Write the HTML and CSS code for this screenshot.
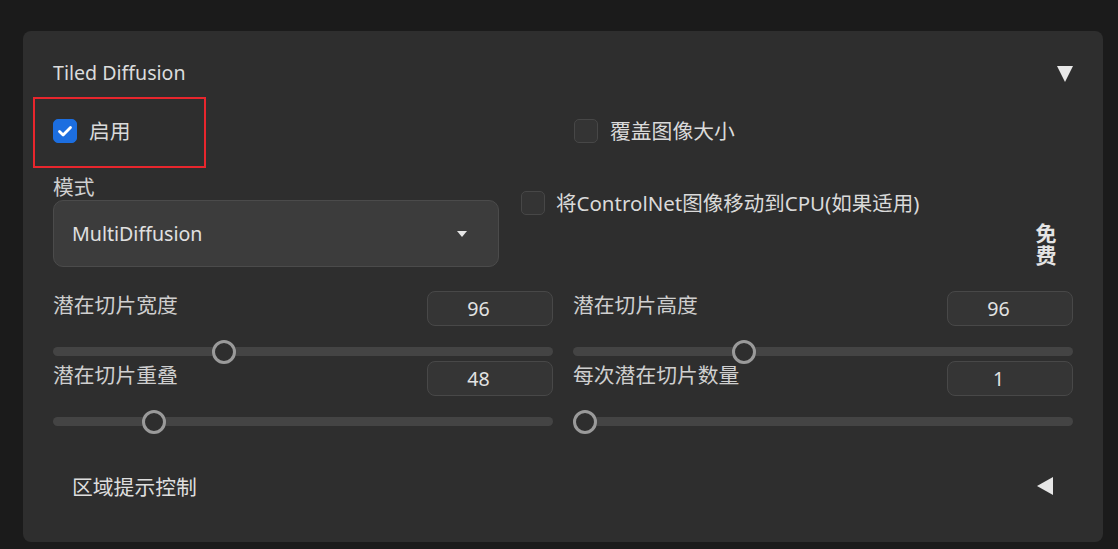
FILE: index.html
```html
<!DOCTYPE html>
<html lang="zh">
<head>
<meta charset="utf-8">
<title>Tiled Diffusion</title>
<link rel="stylesheet" href="styles.css">
</head>
<body>
<div class="panel">
  <div class="header">
    <span class="title">Tiled Diffusion</span>
    <span class="tri-down"></span>
  </div>

  <div class="grid row-check">
    <label class="check"><span class="box on"><svg viewBox="0 0 24 24" width="24" height="24"><path d="M6.5 12.5l3.6 3.6 7.4-7.6" fill="none" stroke="#fff" stroke-width="2.8" stroke-linecap="round" stroke-linejoin="round"/></svg></span><span>启用</span></label>
    <label class="check"><span class="box"></span><span>覆盖图像大小</span></label>
  </div>

  <div class="row-mode">
    <div class="mode">
      <div class="mode-label">模式</div>
      <div class="select"><span>MultiDiffusion</span><span class="tri-small"></span></div>
    </div>
    <label class="check cn"><span class="box"></span><span>将ControlNet图像移动到CPU(如果适用)</span></label>
  </div>

  <div class="grid sliders">
    <div class="slider">
      <div class="s-head"><span>潜在切片宽度</span><span class="num">96</span></div>
      <div class="track"><span class="thumb" style="--p:0.333"></span></div>
    </div>
    <div class="slider">
      <div class="s-head"><span>潜在切片高度</span><span class="num">96</span></div>
      <div class="track"><span class="thumb" style="--p:0.335"></span></div>
    </div>
    <div class="slider">
      <div class="s-head"><span>潜在切片重叠</span><span class="num">48</span></div>
      <div class="track"><span class="thumb" style="--p:0.1875"></span></div>
    </div>
    <div class="slider">
      <div class="s-head"><span>每次潜在切片数量</span><span class="num">1</span></div>
      <div class="track"><span class="thumb" style="--p:0"></span></div>
    </div>
  </div>

  <div class="accordion">
    <span>区域提示控制</span>
    <span class="tri-left"></span>
  </div>

  <div class="highlight"></div>
  <div class="free">免费</div>
</div>
</body>
</html>
```

FILE: styles.css
```css
html, body {
  margin: 0;
  padding: 0;
  background: #1b1b1b;
}
body {
  font-family: "Noto Sans", "Noto Sans CJK SC", sans-serif;
  color: #d6d6d6;
  width: 1118px;
  height: 549px;
  overflow: hidden;
}
.panel {
  position: relative;
  box-sizing: border-box;
  margin: 31px 0 0 23px;
  width: 1080px;
  height: 511px;
  padding: 0 30px;
  background: #2e2e2e;
  border-radius: 8px;
}
.header {
  display: flex;
  justify-content: space-between;
  align-items: center;
  padding-top: 28px;
  height: 28px;
}
.title {
  font-size: 19.6px;
  color: #dcdcdc;
  line-height: 28px;
}
.tri-down {
  width: 0;
  height: 0;
  border-left: 8.5px solid transparent;
  border-right: 8.5px solid transparent;
  border-top: 16px solid #e8e8e8;
  margin-top: 2px;
}
.grid {
  display: grid;
  grid-template-columns: 500px 500px;
  column-gap: 20px;
}
.row-check {
  margin-top: 32px;
  height: 24px;
}
.check {
  display: flex;
  align-items: center;
  gap: 12px;
  font-size: 20.8px;
  line-height: 24px;
  color: #dadada;
}
.box {
  box-sizing: border-box;
  width: 24px;
  height: 24px;
  border-radius: 5px;
  background: #343434;
  border: 1px solid #474747;
  flex: none;
  display: block;
}
.box.on {
  background: #1c6ee0;
  border-color: #1c6ee0;
}
.box svg {
  display: block;
  margin: -1px;
}
.row-check .check:nth-child(2) {
  margin-left: 1px;
}
.row-mode {
  display: flex;
  margin-top: 32px;
}
.mode {
  width: 446px;
}
.mode-label {
  font-size: 20.8px;
  line-height: 24px;
  color: #cfcfcf;
}
.select {
  box-sizing: border-box;
  margin-top: 1px;
  height: 67px;
  border-radius: 10px;
  background: #3c3c3c;
  border: 1px solid #4b4b4b;
  display: flex;
  align-items: center;
  justify-content: space-between;
  padding: 0 31px 0 18px;
  font-size: 19.6px;
  color: #e0e0e0;
}
.tri-small {
  width: 0;
  height: 0;
  border-left: 5.5px solid transparent;
  border-right: 5.5px solid transparent;
  border-top: 6px solid #e6e6e6;
}
.check.cn {
  margin-left: 22px;
  margin-top: 16px;
  align-self: flex-start;
  gap: 11px;
  font-size: 20.5px;
}
.sliders {
  margin-top: 24px;
}
.slider {
  height: 70px;
}
.s-head {
  display: flex;
  justify-content: space-between;
  align-items: flex-start;
  height: 35px;
  font-size: 20.8px;
  line-height: 28px;
  color: #cfcfcf;
}
.num {
  box-sizing: border-box;
  width: 126px;
  height: 35px;
  padding-right: 23px;
  border-radius: 8px;
  background: #353535;
  border: 1px solid #484848;
  text-align: center;
  font-size: 19.6px;
  line-height: 34px;
  color: #e2e2e2;
}
.track {
  position: relative;
  margin-top: 21px;
  height: 9px;
  border-radius: 5px;
  background: #444444;
}
.thumb {
  position: absolute;
  top: 50%;
  left: calc(var(--p) * (100% - 24px));
  box-sizing: border-box;
  width: 24px;
  height: 24px;
  margin-top: -12px;
  border-radius: 50%;
  border: 3px solid #9a9a9a;
  background: #2e2e2e;
}
.accordion {
  display: flex;
  justify-content: space-between;
  align-items: center;
  margin-top: 40px;
  padding: 0 20px 0 19px;
  height: 30px;
  font-size: 20.8px;
  color: #dedede;
}
.tri-left {
  width: 0;
  height: 0;
  border-top: 9.5px solid transparent;
  border-bottom: 9.5px solid transparent;
  border-right: 16px solid #e6e6e6;
}
.highlight {
  position: absolute;
  left: 10px;
  top: 66px;
  width: 173px;
  height: 71px;
  box-sizing: border-box;
  border: 2px solid #e8262d;
}
.free {
  position: absolute;
  left: 1011px;
  top: 192px;
  writing-mode: vertical-rl;
  font-size: 21px;
  font-weight: 700;
  line-height: 24px;
  letter-spacing: 1px;
  color: #e4e4e4;
  font-family: "Noto Sans CJK SC", sans-serif;
}
```
